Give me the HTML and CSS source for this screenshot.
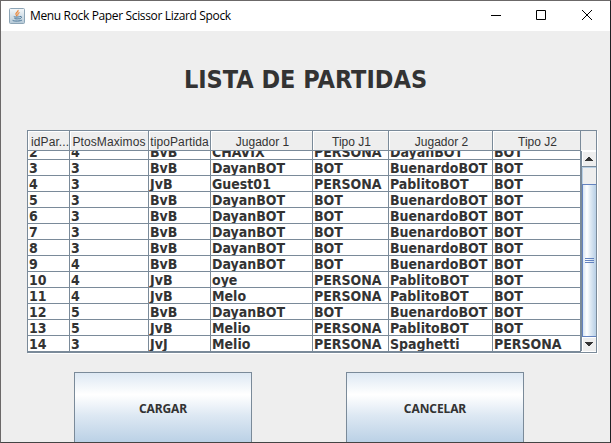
FILE: index.html
```
<!DOCTYPE html>
<html lang="es">
<head>
<meta charset="utf-8">
<title>Menu Rock Paper Scissor Lizard Spock</title>
<link rel="stylesheet" href="styles.css">
</head>
<body>
<div class="window">
  <header class="titlebar">
    <svg class="java" width="16" height="16" viewBox="0 0 16 16">
      <defs><linearGradient id="tile" x2="0" y2="1"><stop stop-color="#f5f8fa"/><stop offset="1" stop-color="#b5c9d7"/></linearGradient></defs>
      <rect x=".5" y=".5" width="15" height="15" rx="1" fill="url(#tile)" stroke="#8da5b6"/>
      <path d="M9 2c1 2-3 2.600-2 4.500l1 1.700M10.500 4.500c-2 1-2 1.500-1.500 3" fill="none" stroke="#ec8435" stroke-width="1.200"/>
      <path d="M5 8.500c-1 .7 5 .8 6 0M5.500 10.500c2 .6 3.500.5 5 0M11 8.500c2.500-.5 1.500 2-.5 2.500M4 12c-1.500 1.300 7.500 1.500 9 0" fill="none" stroke="#4b7698"/>
    </svg>
    <span class="caption">Menu Rock Paper Scissor Lizard Spock</span>
    <svg class="controls" width="101" height="12" viewBox="0 0 101 12" fill="none" stroke="#000">
      <path d="M1 6.500h10M46.500 1.500h9v9h-9zM92 1l10 10M102 1l-10 10"/>
    </svg>
  </header>
  <h1><span>LISTA DE PARTIDAS</span></h1>
  <div class="pane">
    <div class="row head"><span class="id">idPar...</span><span class="pts">PtosMaximos</span><span class="tipo">tipoPartida</span><span>Jugador 1</span><span>Tipo J1</span><span>Jugador 2</span><span>Tipo J2</span><i></i></div>
    <div class="view">
      <div class="rows">
        <div class="row"><span>2</span><span>4</span><span>BvB</span><span>CHAVIX</span><span>PERSONA</span><span>DayanBOT</span><span>BOT</span></div>
        <div class="row"><span>3</span><span>3</span><span>BvB</span><span>DayanBOT</span><span>BOT</span><span>BuenardoBOT</span><span>BOT</span></div>
        <div class="row"><span>4</span><span>3</span><span>JvB</span><span>Guest01</span><span>PERSONA</span><span>PablitoBOT</span><span>BOT</span></div>
        <div class="row"><span>5</span><span>3</span><span>BvB</span><span>DayanBOT</span><span>BOT</span><span>BuenardoBOT</span><span>BOT</span></div>
        <div class="row"><span>6</span><span>3</span><span>BvB</span><span>DayanBOT</span><span>BOT</span><span>BuenardoBOT</span><span>BOT</span></div>
        <div class="row"><span>7</span><span>3</span><span>BvB</span><span>DayanBOT</span><span>BOT</span><span>BuenardoBOT</span><span>BOT</span></div>
        <div class="row"><span>8</span><span>3</span><span>BvB</span><span>DayanBOT</span><span>BOT</span><span>BuenardoBOT</span><span>BOT</span></div>
        <div class="row"><span>9</span><span>4</span><span>BvB</span><span>DayanBOT</span><span>BOT</span><span>BuenardoBOT</span><span>BOT</span></div>
        <div class="row"><span>10</span><span>4</span><span>JvB</span><span>oye</span><span>PERSONA</span><span>PablitoBOT</span><span>BOT</span></div>
        <div class="row"><span>11</span><span>4</span><span>JvB</span><span>Melo</span><span>PERSONA</span><span>PablitoBOT</span><span>BOT</span></div>
        <div class="row"><span>12</span><span>5</span><span>BvB</span><span>DayanBOT</span><span>BOT</span><span>BuenardoBOT</span><span>BOT</span></div>
        <div class="row"><span>13</span><span>5</span><span>JvB</span><span>Melio</span><span>PERSONA</span><span>PablitoBOT</span><span>BOT</span></div>
        <div class="row"><span>14</span><span>3</span><span>JvJ</span><span>Melio</span><span>PERSONA</span><span>Spaghetti</span><span>PERSONA</span></div>
      </div>
      <div class="scroll">
        <div class="arrow up"><svg width="8" height="4" shape-rendering="crispEdges"><path d="M0 4L3 0h1l4 4z" fill="#333"/></svg></div>
        <div class="track"></div>
        <div class="thumb"><i></i><i></i><i></i></div>
        <div class="arrow"><svg width="8" height="4" shape-rendering="crispEdges"><path d="M0 0L3 4h1l4-4z" fill="#333"/></svg></div>
      </div>
    </div>
  </div>
  <div class="buttons"><button>CARGAR</button><button>CANCELAR</button></div>
</div>
</body>
</html>
```
FILE: styles.css
```
* { box-sizing: border-box; }
body { margin: 0; overflow: hidden; }
.window {
  width: 611px; height: 443px; overflow: hidden;
  background: #eee; color: #333;
  border: 1px solid #6b6868; border-right-color: #202024; border-bottom-color: #444;
  font-family: "DejaVu Sans Condensed", "DejaVu Sans", sans-serif;
  font-stretch: condensed;
}
.titlebar { height: 30px; display: flex; align-items: center; background: #fff; padding-left: 8px; }
.java { margin-right: 5px; }
.caption { font: 12px/16px "Open Sans", "Noto Sans", sans-serif; color: #000; white-space: nowrap; letter-spacing: -.35px; }
.controls { margin: 0 19px 2px auto; overflow: visible; }
h1 { margin: 0; height: 99px; padding-top: 33px; text-align: center; font-size: 25px; line-height: 32px; }
.pane {
  width: 570px; height: 223px; margin-left: 26px;
  border: 1px solid #7a8a99;
  box-shadow: 1px 1px #fff;
}
.row { display: grid; grid-template-columns: 42px 79px 62px 102px 76px 104px 88px 1fr; height: 16px; }
.row span {
  border-right: 1px solid #7a8a99; border-bottom: 1px solid #7a8a99;
  padding-left: 1px; font-size: 14px; line-height: 17px; font-weight: bold; white-space: nowrap; overflow: hidden;
}
.row.head { height: 20px; }
.head span {
  font: 12px/22px "Liberation Sans", Arial, sans-serif; text-align: center; padding: 0 0 0 2px;
  box-shadow: inset 1px 1px #fff;
}
.head i { border-bottom: 1px solid #fff; }
.head .id { text-align: left; padding-left: 3px; letter-spacing: .1px; }
.head .pts, .head .tipo { padding: 0; letter-spacing: .1px; }
.view { display: flex; height: 201px; overflow: hidden; background: #fff; }
.rows { width: 553px; margin-top: -7px; flex: none; }
.scroll { width: 15px; height: 200px; border-left: 1px solid #7a8a99; background: #eee; display: flex; flex-direction: column; }
.arrow { height: 14px; display: flex; align-items: center; justify-content: center; box-shadow: inset 1px 1px #fff; }
.up { height: 16px; border-bottom: 1px solid #7a8a99; }
.track { height: 17px; border: 1px solid #b8cfe5; border-width: 1px 0 0 1px; }
.thumb {
  height: 153px; border: 1px solid #6382bf; border-right: 0;
  background: linear-gradient(90deg, #d8e5f2, #fff 30%, #dce8f3 60%, #b8cfe5);
  display: flex; flex-direction: column; align-items: center; justify-content: center; gap: 1px;
}
.thumb i { width: 9px; height: 1px; background: #6382bf; }
.buttons { display: flex; gap: 94px; margin: 19px 0 0 73px; }
button {
  width: 178px; height: 73px; padding: 0; border: 1px solid #7a8a99; color: #333;
  background: linear-gradient(#dde8f3, #fff 30%, #fff 31%, #dde8f3 60%, #b8cfe5);
  font: bold 12px "Noto Sans", sans-serif; letter-spacing: -.1px;
}
```
